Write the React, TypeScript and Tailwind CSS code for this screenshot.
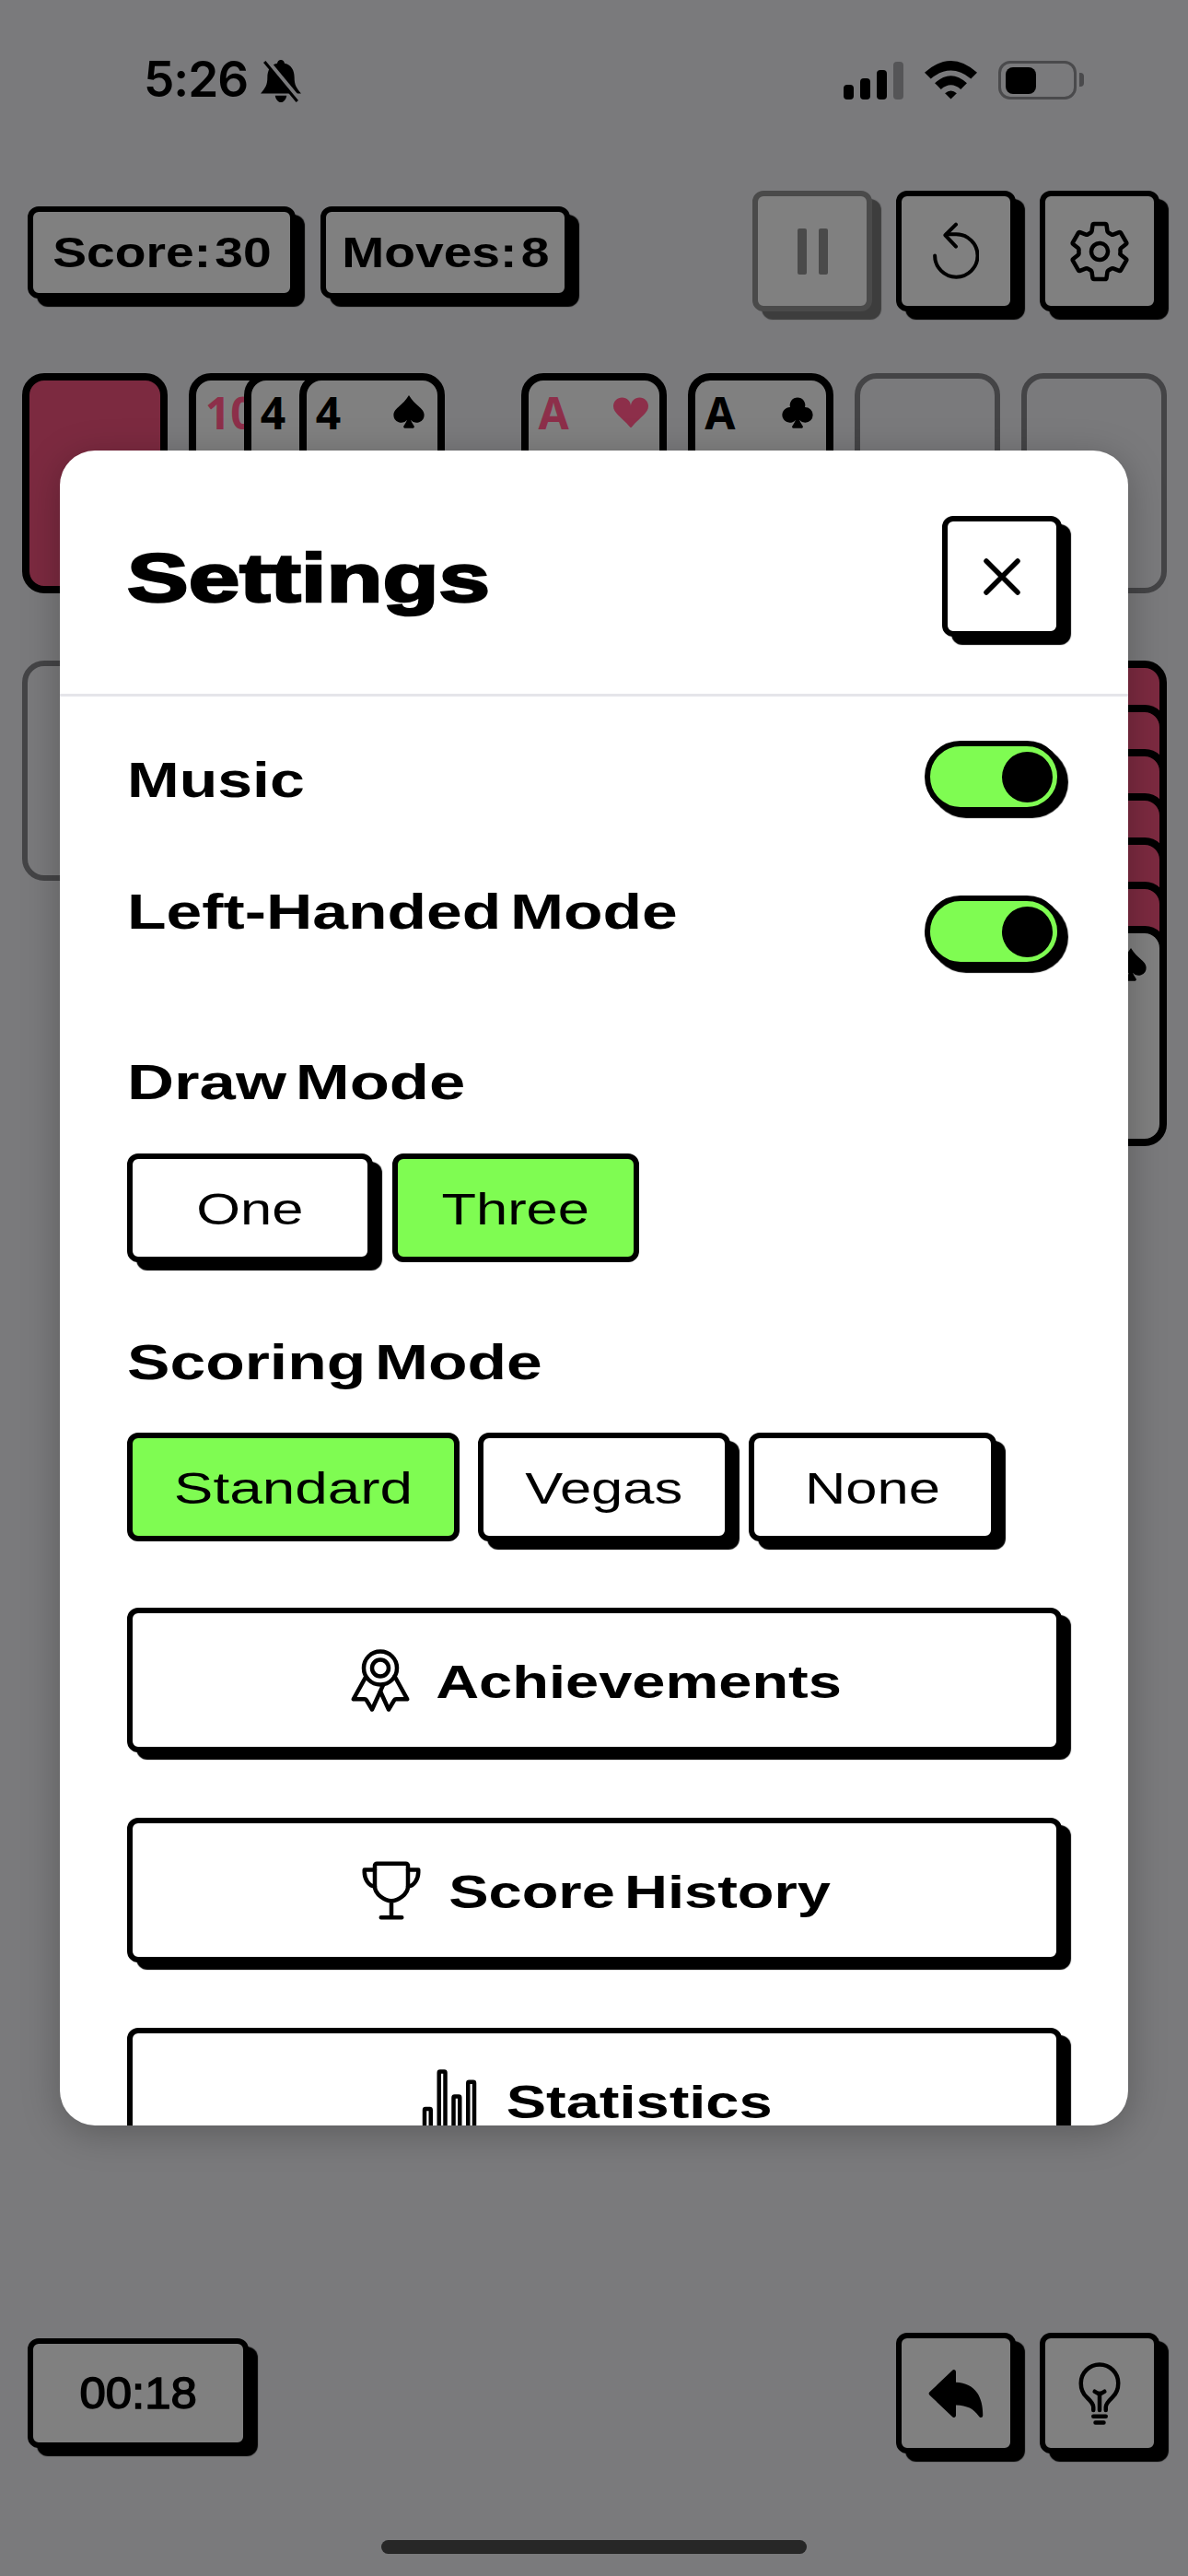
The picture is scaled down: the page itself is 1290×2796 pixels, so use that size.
import type { ReactNode } from 'react'
import { BsSuitClubFill, BsSuitHeartFill, BsSuitSpadeFill } from 'react-icons/bs'
import {
  IoArrowUndo,
  IoBulbOutline,
  IoRibbonOutline,
  IoSettingsOutline,
  IoStatsChartOutline,
  IoTrophyOutline,
} from 'react-icons/io5'

const sans = "font-['Liberation_Sans',Arial,sans-serif]"
const cardFont = "font-['Noto_Sans',sans-serif]"

function StatusBar() {
  return (
    <div className="flex h-[108px] items-end justify-between pl-[156px] pr-[121px]">
      <div className="flex items-end gap-[13px]">
        <span className="mb-[-1px] font-['Inter',sans-serif] text-[53px] font-semibold leading-[46px] tracking-[-1px] text-black">
          5:26
        </span>
        <svg width="46" height="46" viewBox="0 0 44 44" className="mb-[-3px]">
          <path
            d="M22 0c2 0 3.500 1.500 3.800 3.500C33 5 36 11 36 18c0 8 2 11 7 17H1c5-6 7-9 7-17 0-7 3-13 10.200-14.500C18.500 1.500 20 0 22 0z"
            fill="#000"
          />
          <path d="M16 37h12c-.5 3.500-3 7-6 7s-5.500-3.500-6-7z" fill="#000" />
          <path d="M7 1l34 41" stroke="#7a7a7c" strokeWidth="6" />
          <path d="M5 2l34 41" stroke="#000" strokeWidth="3" />
        </svg>
      </div>
      <div className="flex items-end">
        <div className="flex items-end gap-[7px]">
          <div className="h-[16px] w-[11px] rounded-[4px] bg-black" />
          <div className="h-[23px] w-[11px] rounded-[4px] bg-black" />
          <div className="h-[32px] w-[11px] rounded-[4px] bg-black" />
          <div className="h-[41px] w-[11px] rounded-[4px] bg-[#555557]" />
        </div>
        <svg width="57" height="42" viewBox="0 0 170 125" className="ml-[23px]">
          <path d="M0 38Q85-38 170 38L150 58Q85 5 20 58Z" fill="#000" />
          <path d="M33 72Q85 24 137 72L117 92Q85 65 53 92Z" fill="#000" />
          <path d="M66 105Q85 88 104 105L85 124Z" fill="#000" />
        </svg>
        <div className="relative ml-[23px] flex h-[42px] w-[85px] items-center rounded-[13px] border-[3px] border-[#4a4a4c] pl-[5px]">
          <div className="h-[29px] w-[33px] rounded-[8px] bg-black" />
          <div className="absolute right-[-11px] top-[10px] h-[15px] w-[5px] rounded-r-[4px] bg-[#4a4a4c]" />
        </div>
      </div>
    </div>
  )
}

function Stat({ label, width }: { label: string; width: string }) {
  return (
    <div
      className={`mt-[2px] flex h-[100px] items-center justify-center rounded-[12px] border-[6px] border-black bg-[#808080] shadow-[10px_9px_1px_#000] ${width}`}
    >
      <span className={`${sans} origin-center scale-x-[1.2] whitespace-nowrap pt-[2px] text-[46px] font-bold text-black [word-spacing:-0.2em]`}>
        {label}
      </span>
    </div>
  )
}

function IconButton({ children, dim }: { children: ReactNode; dim?: boolean }) {
  return (
    <div
      className={
        dim
          ? 'flex h-[131px] w-[130px] items-center justify-center rounded-[12px] border-[6px] border-[#4a4a4a] bg-[#808080] text-[#4a4a4a] shadow-[10px_9px_1px_#3d3d3d]'
          : 'flex h-[131px] w-[130px] items-center justify-center rounded-[12px] border-[6px] border-black bg-[#808080] text-black shadow-[10px_9px_1px_#000]'
      }
    >
      {children}
    </div>
  )
}

function Card({ rank, red, suit, className = '' }: { rank: string; red?: boolean; suit?: ReactNode; className?: string }) {
  return (
    <div className={`h-[239px] w-[158px] rounded-[24px] border-[8px] border-black bg-[#808080] ${className}`}>
      <div className={`flex items-start justify-between pl-[10px] pr-[12px] pt-[7px] ${cardFont} text-[48px] font-bold leading-[56px] ${red ? 'text-[#8d2f4a]' : 'text-black'}`}>
        <span>{rank}</span>
        {suit && <span className="pt-[9px]">{suit}</span>}
      </div>
    </div>
  )
}

function Slot({ className = '' }: { className?: string }) {
  return <div className={`h-[239px] w-[158px] rounded-[24px] border-[6px] border-[#444446] ${className}`} />
}

function FaceDown({ className = '' }: { className?: string }) {
  return <div className={`h-[239px] w-[158px] rounded-[24px] border-[8px] border-black bg-[#7c2a40] ${className}`} />
}

function Board() {
  return (
    <div className="mt-[67px] grid grid-cols-[repeat(7,158px)] gap-x-[22.800px] gap-y-[73px] pl-[24px]">
      <FaceDown />
      <div className="flex">
        <Card rank="10" red className="shrink-0" />
        <Card rank="4" className="ml-[-98px] shrink-0" />
        <Card rank="4" suit={<BsSuitSpadeFill size={38} />} className="ml-[-98px] shrink-0" />
      </div>
      <div />
      <Card rank="A" red suit={<BsSuitHeartFill size={38} />} />
      <Card rank="A" suit={<BsSuitClubFill size={38} />} />
      <Slot />
      <Slot />

      <Slot />
      <div />
      <div />
      <div />
      <div />
      <div />
      <div>
        <FaceDown />
        <FaceDown className="mt-[-191px]" />
        <FaceDown className="mt-[-191px]" />
        <FaceDown className="mt-[-191px]" />
        <FaceDown className="mt-[-191px]" />
        <FaceDown className="mt-[-191px]" />
        <Card
          rank="4"
          suit={<BsSuitSpadeFill size={38} />}
          className="mt-[-191px]"
        />
      </div>
    </div>
  )
}

function Toggle() {
  return (
    <div className="mr-[-2px] flex h-[78px] w-[150px] items-center justify-end rounded-full border-[6px] border-black bg-[#7ffc52] pr-[5px] shadow-[6px_6px_1px_#000]">
      <div className="h-[55px] w-[55px] rounded-full bg-black" />
    </div>
  )
}

function Segment({ label, width, active, wide }: { label: string; width: string; active?: boolean; wide?: boolean }) {
  return (
    <div
      className={`flex h-[118px] items-center justify-center rounded-[12px] border-[6px] border-black ${width} ${
        active ? 'bg-[#7ffc52]' : 'bg-white shadow-[10px_9px_1px_#000]'
      }`}
    >
      <span className={`origin-center whitespace-nowrap pt-[4px] text-[48px] text-black ${wide ? 'scale-x-[1.33]' : 'scale-x-[1.28]'}`}>
        {label}
      </span>
    </div>
  )
}

function BigButton({ icon, label, textWidth, gap }: { icon: ReactNode; label: string; textWidth: string; gap: string }) {
  return (
    <div className={`flex h-[157px] w-[1015px] shrink-0 items-center justify-center rounded-[12px] border-[6px] border-black bg-white shadow-[10px_8px_1px_#000] ${gap}`}>
      {icon}
      <span className={`flex justify-center pt-[5px] ${textWidth}`}>
        <span className="origin-center scale-x-[1.3] whitespace-nowrap text-[50px] font-bold text-black [word-spacing:-0.12em]">
          {label}
        </span>
      </span>
    </div>
  )
}

function SettingsModal() {
  return (
    <div className={`absolute left-[65px] top-[489px] flex h-[1818px] w-[1160px] flex-col overflow-hidden rounded-[38px] bg-white shadow-[0_8px_40px_rgba(0,0,0,0.25)] ${sans}`}>
      <div className="flex h-[267px] shrink-0 items-center justify-between border-b-[3px] border-[#e5e5ea] pl-[73px] pr-[72px] pt-[10px]">
        <span className="mt-[4px] origin-left scale-x-[1.35] text-[74px] font-bold leading-[84px] text-black [-webkit-text-stroke:2.500px_#000]">
          Settings
        </span>
        <div className="mt-[-1px] flex h-[131px] w-[130px] items-center justify-center rounded-[12px] border-[6px] border-black bg-white shadow-[10px_9px_1px_#000]">
          <svg width="40" height="40" viewBox="0 0 40 40" fill="none" stroke="#000" strokeWidth="5.500" strokeLinecap="round">
            <path d="M3 3l34 34M37 3L3 37" />
          </svg>
        </div>
      </div>
      <div className="flex flex-col px-[73px]">
        <div className="mt-[48px] flex items-center justify-between">
          <span className="origin-left scale-x-[1.26] pt-[6px] text-[54px] font-bold leading-[60px] text-black">Music</span>
          <Toggle />
        </div>
        <div className="mt-[90px] flex items-start justify-between">
          <span className="mt-[-13px] origin-left scale-x-[1.29] whitespace-nowrap text-[54px] font-bold leading-[60px] text-black [word-spacing:-0.14em]">
            Left-Handed Mode
          </span>
          <Toggle />
        </div>
        <div className="mt-[94px] origin-left scale-x-[1.31] text-[54px] font-bold leading-[60px] text-black [word-spacing:-0.14em]">
          Draw Mode
        </div>
        <div className="mt-[48px] flex gap-[21px]">
          <Segment label="One" width="w-[267px]" />
          <Segment label="Three" width="w-[268px]" active />
        </div>
        <div className="mt-[78px] origin-left scale-x-[1.29] text-[54px] font-bold leading-[60px] text-black [word-spacing:-0.14em]">
          Scoring Mode
        </div>
        <div className="mt-[47px] flex gap-[20px]">
          <Segment label="Standard" width="w-[361px]" active wide />
          <Segment label="Vegas" width="w-[274px]" />
          <Segment label="None" width="w-[269px]" />
        </div>
        <div className="mt-[72px] flex flex-col gap-[71px]">
          <BigButton icon={<IoRibbonOutline size={72} />} label="Achievements" textWidth="w-[441px]" gap="gap-[24px]" />
          <BigButton icon={<IoTrophyOutline size={72} />} label="Score History" textWidth="w-[415px]" gap="gap-[26px]" />
          <BigButton icon={<IoStatsChartOutline size={72} />} label="Statistics" textWidth="w-[289px]" gap="gap-[26px]" />
        </div>
      </div>
    </div>
  )
}

export default function App() {
  return (
    <div className={`relative flex h-[2796px] w-[1290px] flex-col overflow-hidden bg-[#7a7a7c] ${sans}`}>
      <StatusBar />

      <div className="mt-[99px] flex items-center justify-between pl-[30px] pr-[31px]">
        <div className="flex gap-[27px]">
          <Stat label="Score: 30" width="w-[291px]" />
          <Stat label="Moves: 8" width="w-[271px]" />
        </div>
        <div className="flex gap-[26px]">
          <IconButton dim>
            <div className="flex gap-[13px]">
              <div className="h-[50px] w-[10px] rounded-[2px] bg-[#4a4a4a]" />
              <div className="h-[50px] w-[10px] rounded-[2px] bg-[#4a4a4a]" />
            </div>
          </IconButton>
          <IconButton>
            <svg width="50" height="63" viewBox="0 0 150 190" fill="none" stroke="#000" strokeWidth="12" strokeLinecap="round" strokeLinejoin="round">
              <path d="M6 110A70 70 0 1 0 76 40H45" />
              <path d="M75 8L40 43L75 80" />
            </svg>
          </IconButton>
          <IconButton>
            <IoSettingsOutline size={72} />
          </IconButton>
        </div>
      </div>

      <Board />

      <div className="mt-auto flex items-center justify-between pl-[30px] pr-[31px]">
        <div className="flex h-[119px] w-[240px] items-center justify-center rounded-[12px] border-[6px] border-black bg-[#808080] shadow-[10px_9px_1px_#000]">
          <span className="origin-center scale-x-[1.06] text-[48px] text-black [-webkit-text-stroke:1.500px_#000]">00:18</span>
        </div>
        <div className="flex gap-[26px]">
          <IconButton>
            <IoArrowUndo size={72} />
          </IconButton>
          <IconButton>
            <IoBulbOutline size={72} />
          </IconButton>
        </div>
      </div>

      <div className="mx-auto mb-[24px] mt-[94px] h-[15px] w-[462px] rounded-full bg-[#272727]" />

      <SettingsModal />
    </div>
  )
}
